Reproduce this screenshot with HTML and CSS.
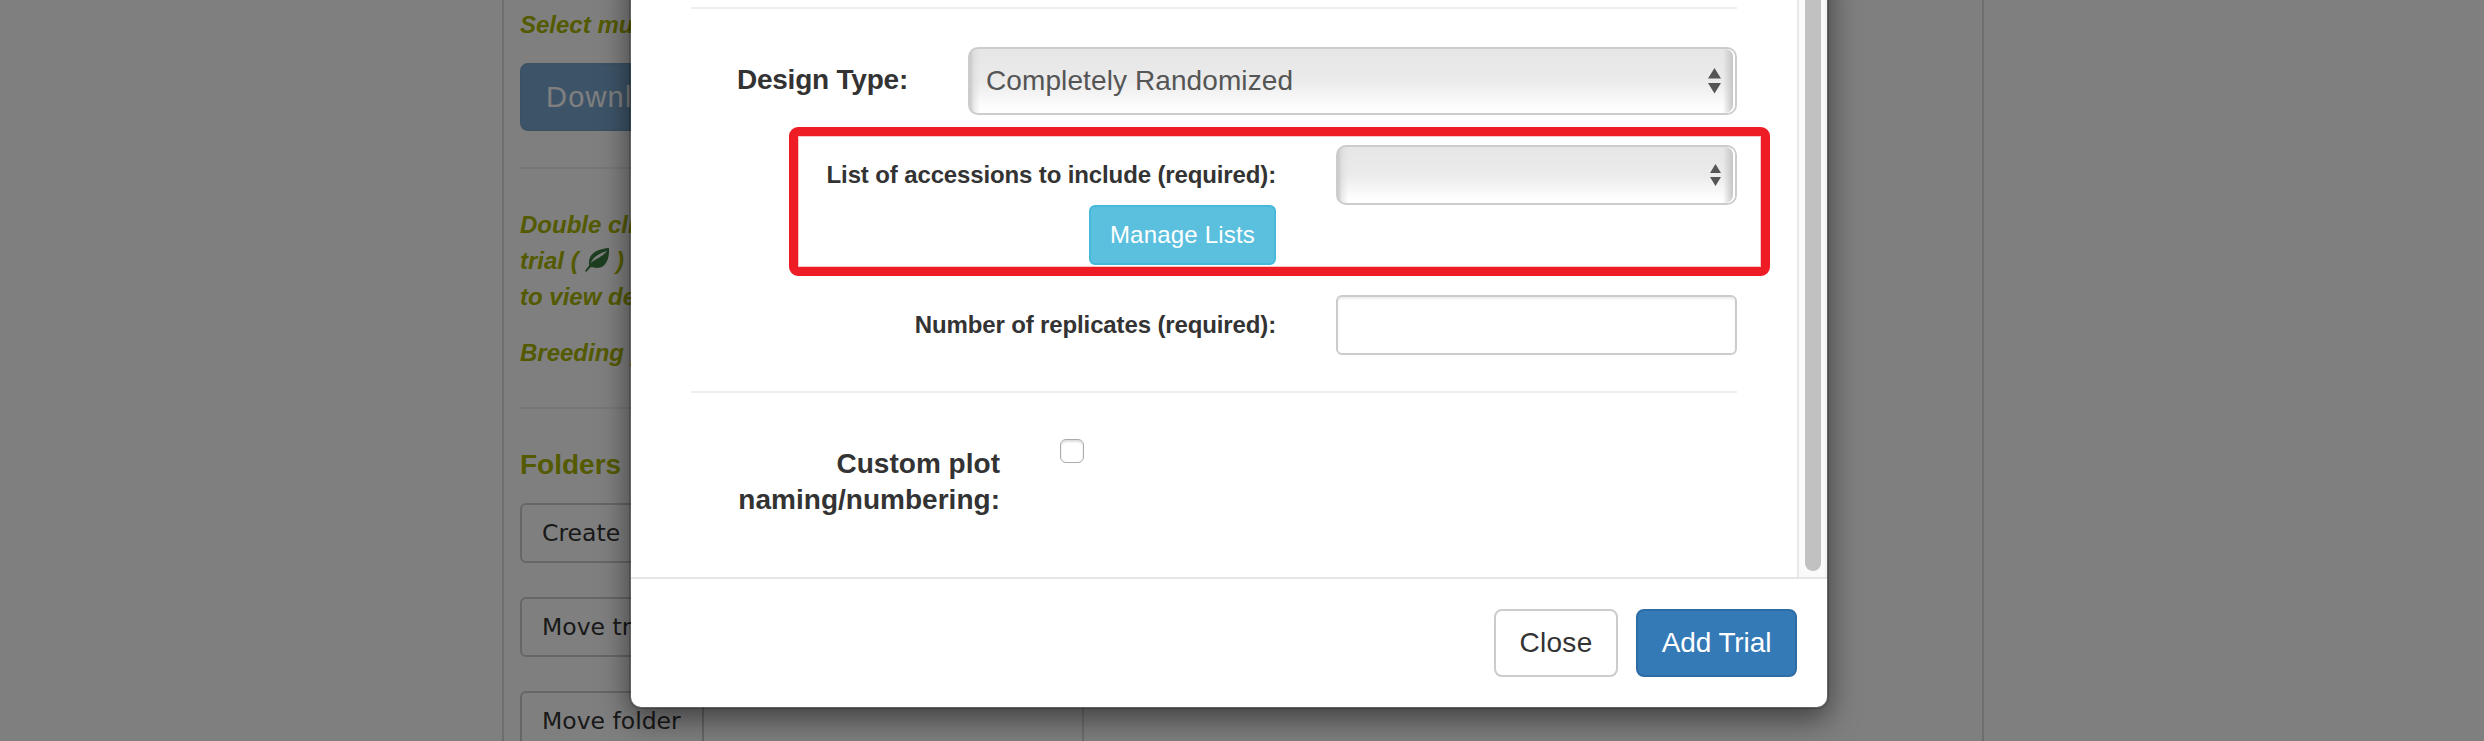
FILE: index.html
```
<!DOCTYPE html>
<html lang="en">
<head>
<meta charset="utf-8">
<title>Add Trial</title>
<link rel="stylesheet" href="styles.css">
</head>
<body>
<div class="page">
  <aside class="sidebar">
    <p class="hint hint-first">Select multiple</p>
    <button class="btn btn-download">Download</button>
    <div class="rule rule-a"></div>
    <p class="hint hint-help">Double click on a<br>trial ( <svg class="leaf" viewBox="0 0 24 24"><path fill-rule="evenodd" d="M24 0C24.500 9 22 18.500 14 19.800C10.500 20.300 7.500 19 5.500 19.300L1.200 24L0 22.700L4.200 17.500C2.500 8 9 1 24 0ZM22 3C17 4.500 8 8 5.500 15.500C10 10.500 17 9.500 22 3Z"/></svg> )<br>to view details</p>
    <p class="hint hint-last">Breeding programs</p>
    <div class="rule rule-b"></div>
    <h4 class="folders">Folders</h4>
    <button class="btn btn-side">Create New</button>
    <button class="btn btn-side">Move trial</button>
    <button class="btn btn-side">Move folder</button>
  </aside>
  <main class="tree"></main>
</div>
<div class="backdrop"></div>
<div class="modal">
  <div class="modal-scroll">
    <form class="modal-body">
      <div class="divider"></div>
      <div class="row design">
        <label class="label-lg">Design Type:</label>
        <div class="select select-lg"><span>Completely Randomized</span><svg class="arrows" width="13" height="26" viewBox="0 0 13 26"><path d="M6.500 0L13 10.500H0ZM0 15H13L6.500 25.500Z"/></svg></div>
      </div>
      <div class="highlight">
        <div class="list-side">
          <label>List of accessions to include (required):</label>
          <button type="button" class="btn btn-info">Manage Lists</button>
        </div>
        <div class="select select-sm"><svg class="arrows" width="11" height="22" viewBox="0 0 11 22"><path d="M5.500 0L11 9H0ZM0 13H11L5.500 22Z"/></svg></div>
      </div>
      <div class="row reps">
        <label>Number of replicates (required):</label>
        <input class="field" type="text">
      </div>
      <div class="divider divider-mid"></div>
      <div class="row naming">
        <label class="label-lg">Custom plot<br>naming/numbering:</label>
        <span class="checkbox"></span>
      </div>
    </form>
    <div class="track"><div class="thumb"></div></div>
  </div>
  <div class="modal-footer">
    <button class="btn btn-close">Close</button>
    <button class="btn btn-primary">Add Trial</button>
  </div>
</div>
</body>
</html>
```
FILE: styles.css
```
* { box-sizing: border-box; }
body {
  margin: 0;
  width: 2484px;
  height: 741px;
  overflow: hidden;
  position: relative;
  background: #fff;
  color: #333;
  font-family: "Liberation Sans", Arial, sans-serif;
  font-size: 24px;
  line-height: 34px;
}
p, h4 { margin: 0; }
.btn {
  display: block;
  margin: 0;
  padding: 0;
  height: 60px;
  border: 2px solid #ccc;
  border-radius: 6px;
  background: #fff;
  color: #333;
  font: 24px/34px "Liberation Sans", Arial, sans-serif;
  text-align: center;
  white-space: nowrap;
}

/* Page behind the dialog */
.page {
  display: flex;
  width: 1482px;
  height: 741px;
  margin-left: 502px;
  border: solid #ddd;
  border-width: 0 2px;
  overflow: hidden;
}
.sidebar { width: 580px; flex: none; padding: 8px 16px 0; border-right: 2px solid #ddd; }
.tree { flex: 1; }
.hint { color: #a8b400; font-weight: bold; font-style: italic; line-height: 36px; white-space: nowrap; }
.hint-first { height: 34px; line-height: 34px; }
.btn-download {
  width: 200px;
  height: 68px;
  margin-top: 21px;
  padding-left: 24px;
  border-color: #76a2c9;
  border-radius: 8px;
  background: #7aa8d0;
  color: #fff;
  font-size: 29px;
  letter-spacing: 1.2px;
  text-align: left;
}
.rule { height: 2px; background: #eee; }
.rule-a { margin-top: 36px; }
.hint-help { margin-top: 38px; }
.leaf { width: 24px; height: 24px; vertical-align: -3px; fill: #3b7a42; margin: 0; }
.hint-last { margin-top: 20px; }
.rule-b { margin-top: 36px; background: #eee; }
.folders { margin-top: 38px; height: 46px; color: #a8b400; font-size: 28px; line-height: 36px; }
.btn-side {
  width: 184px;
  margin: 10px 0 34px;
  padding-left: 20px;
  text-align: left;
  font-family: "DejaVu Sans", Verdana, sans-serif;
  font-size: 23.5px;
}
.folders + .btn-side { width: 230px; word-spacing: 4px; }
.btn-side + .btn-side { margin-top: 0; }
.backdrop { position: absolute; inset: 0; background: rgba(0, 0, 0, .5); }

/* Dialog */
.modal {
  position: absolute;
  left: 629px;
  top: -40px;
  width: 1200px;
  height: 749px;
  padding-top: 38px;
  border: 2px solid rgba(0, 0, 0, .2);
  border-radius: 12px;
  background: #fff;
  background-clip: padding-box;
  box-shadow: 0 10px 30px rgba(0, 0, 0, .5);
}
.modal-scroll { display: flex; height: 577px; }
.modal-body { width: 1166px; padding: 7px 60px 0; flex: none; }
.track {
  width: 30px;
  border-left: 2px solid #e8e8e8;
  border-right: 2px solid #f2f2f2;
  background: #fafafa;
  padding: 0 4px 6px 6px;
}
.thumb { height: 100%; background: #c1c1c1; border-radius: 0 0 8px 8px; }
.divider { height: 2px; background: #eee; }
.divider-mid { margin-top: 36px; }
.row { display: flex; width: 1046px; align-items: center; }
label { font-weight: bold; text-align: right; white-space: nowrap; letter-spacing: -.13px; }
.label-lg { font-size: 28px; line-height: 36px; letter-spacing: 0; }
.design { margin-top: 38px; gap: 60px; }
.design .label-lg { width: 217px; margin-bottom: 2px; letter-spacing: -.22px; }
.select {
  position: relative;
  display: flex;
  align-items: center;
  justify-content: space-between;
  border: 2px solid #ccc;
  border-radius: 10px;
  background:
    linear-gradient(90deg, #c9c9c9 0, rgba(215, 215, 215, .5) 4px, rgba(240, 240, 240, 0) 10px),
    linear-gradient(#e6e6e6 0, #ebebeb 50%, #fdfdfd 90%, #fff 100%);
  color: #555;
  overflow: hidden;
}
.select::after {
  content: "";
  position: absolute;
  inset: 0 2px 0 auto;
  width: 10px;
  border-radius: 0 8px 8px 0;
  background: linear-gradient(90deg, rgba(220, 220, 220, 0), #c5c5c5);
  box-shadow: 3px 0 0 #fff;
}
.select-lg { flex: 1; height: 68px; padding: 0 14px 0 16px; font-size: 28px; letter-spacing: .1px; }
.select-lg span { margin-bottom: 1px; }
.arrows { display: block; fill: #555; margin-left: auto; }
.highlight {
  display: flex;
  gap: 60px;
  width: 981px;
  height: 149px;
  margin: 12px 0 0 98px;
  border: 9px solid #ee1c25;
  border-radius: 9px;
  box-shadow: inset 0 0 0 1px #f9c5c7;
}
.list-side { width: 478px; padding-top: 22px; display: flex; flex-direction: column; align-items: flex-end; gap: 13px; }
.btn-info { width: 187px; border-color: #46b8da; background: #5bc0de; color: #fff; letter-spacing: .2px; }
.select-sm { width: 401px; height: 60px; margin-top: 9px; padding-right: 14px; }
.reps { margin-top: 19px; gap: 60px; justify-content: flex-end; }
.field {
  width: 401px;
  height: 60px;
  border: 2px solid #ccc;
  border-radius: 6px;
  background: #fff;
  box-shadow: inset 0 2px 2px rgba(0, 0, 0, .075);
}
.naming { align-items: flex-start; gap: 60px; padding-top: 46px; }
.naming .label-lg { width: 309px; margin-top: 7px; letter-spacing: .02px; }
.checkbox {
  width: 24px;
  height: 24px;
  border: 1px solid #aaa;
  border-radius: 6px;
  background: #fff;
  box-shadow: inset 0 2px 2px #ddd;
}
.modal-footer {
  display: flex;
  justify-content: flex-end;
  gap: 18px;
  padding: 30px;
  border-top: 2px solid #e5e5e5;
}
.modal-footer .btn { height: 68px; border-radius: 8px; font-size: 28px; }
.modal-footer .btn-close { width: 124px; letter-spacing: .3px; }
.modal-footer .btn-primary { width: 161px; border-color: #2e6da4; background: #337ab7; color: #fff; letter-spacing: -.1px; }
```
